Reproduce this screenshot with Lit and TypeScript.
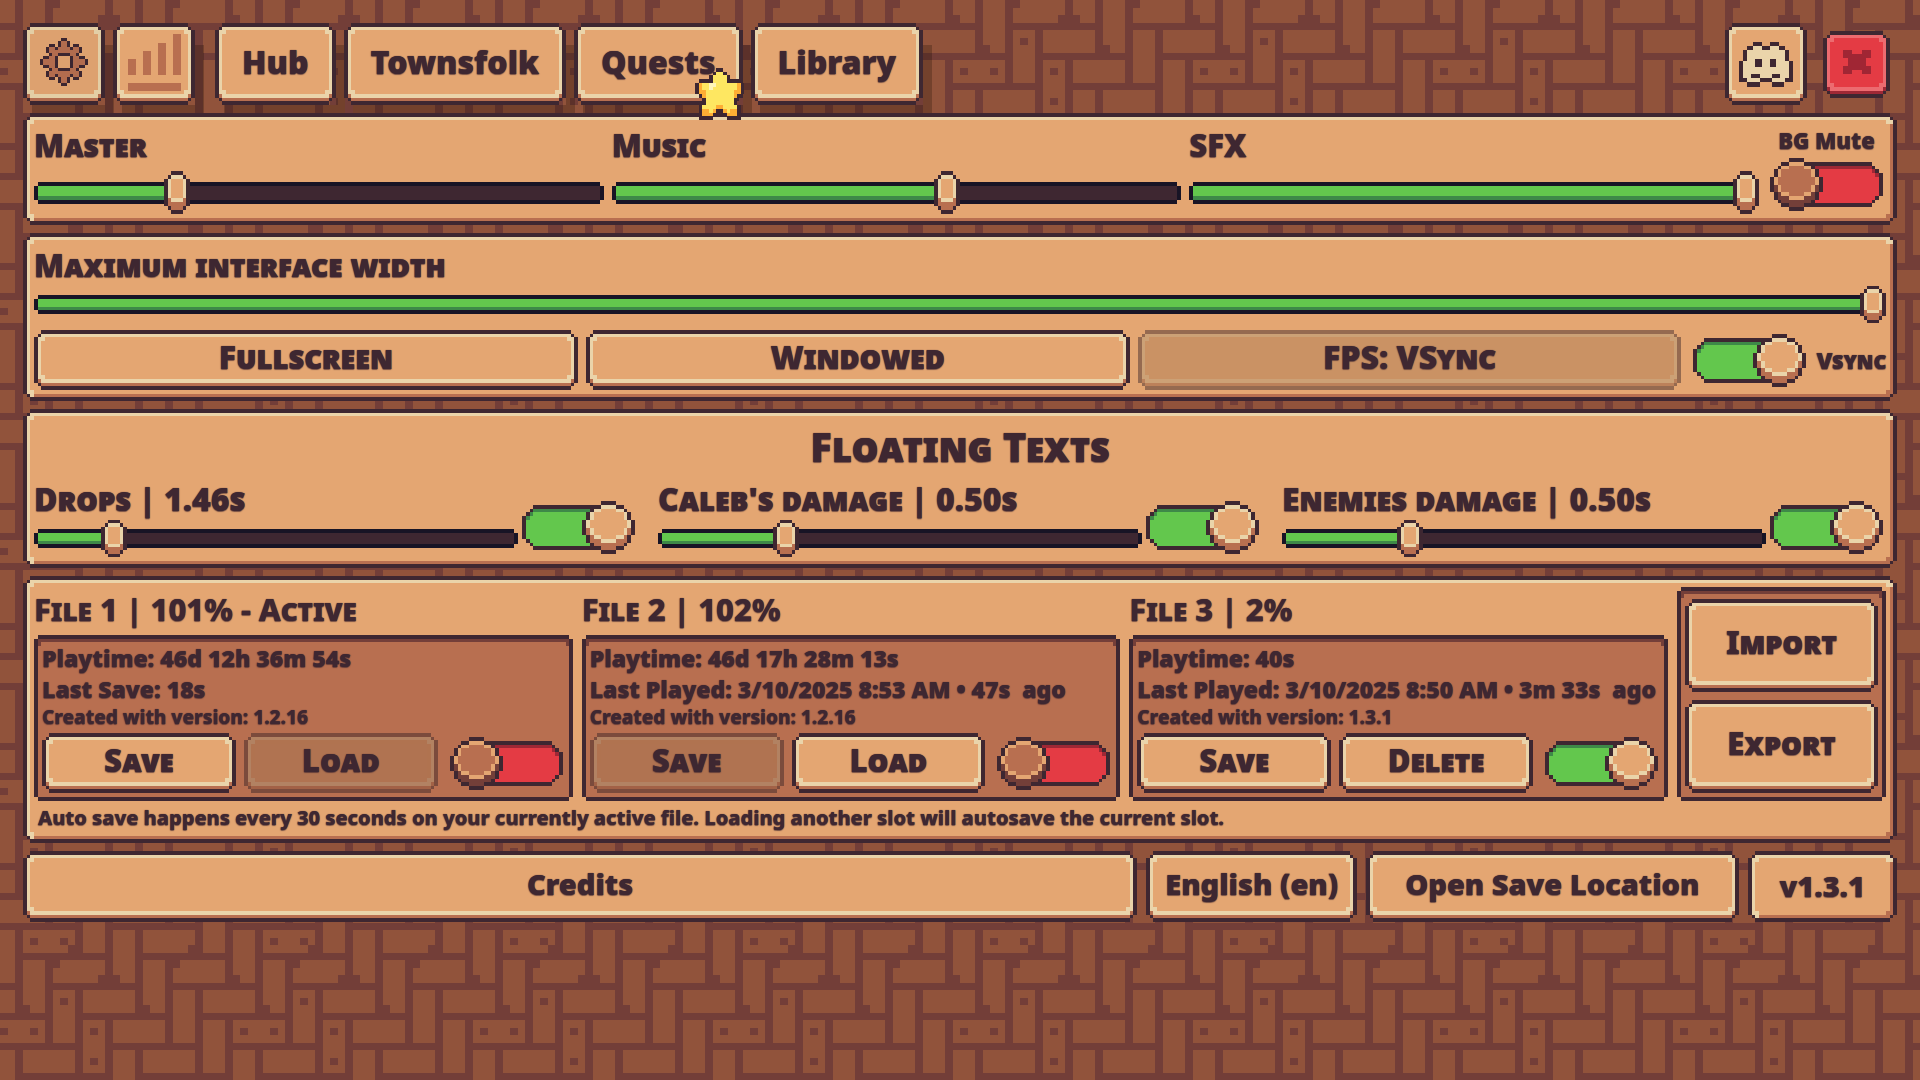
import { LitElement, html, svg, css, unsafeCSS } from "lit";
import { customElement, property, state } from "lit/decorators.js";

type Palette = Record<string, string>;

const WOOD: Palette = { X: "#3e2731", c: "#ead4aa", f: "#e4a672", b: "#b86f50" };
const OFF_WOOD: Palette = { X: "#2d1c24", c: "#ab9b7c", f: "#a77953", b: "#86513a" };
const RED: Palette = { X: "#3e2731", c: "#ec6b70", f: "#e43b44", b: "#9e2835" };
const INSET: Palette = { X: "#3e2731", d: "#743f39", f: "#b86f50" };

/** Turns rows of palette letters into runs of equal colour. */
function runs(rows: string[], palette: Palette) {
  const out: { x: number; y: number; w: number; fill: string }[] = [];
  rows.forEach((row, y) => {
    let x = 0;
    while (x < row.length) {
      let end = x + 1;
      while (end < row.length && row[end] === row[x]) end++;
      const fill = palette[row[x]];
      if (fill) out.push({ x, y, w: end - x, fill });
      x = end;
    }
  });
  return out;
}

function svgUrl(body: string, w: number, h: number, scale: number, opacity = 1) {
  const doc =
    `<svg xmlns="http://www.w3.org/2000/svg" width="${w * scale}" height="${h * scale}" viewBox="0 0 ${w} ${h}" ` +
    `preserveAspectRatio="none" shape-rendering="crispEdges"><g opacity="${opacity}">${body}</g></svg>`;
  return unsafeCSS(`url("data:image/svg+xml,${encodeURIComponent(doc)}")`);
}

function pixelUrl(rows: string[], palette: Palette, scale = 4, opacity = 1) {
  const body = runs(rows, palette)
    .map((r) => `<rect x="${r.x}" y="${r.y}" width="${r.w}" height="1" fill="${r.fill}"/>`)
    .join("");
  return svgUrl(body, rows[0].length, rows.length, scale, opacity);
}

const BUTTON_TILE = [
  "..XXXX..",
  ".XccccX.",
  "XccffccX",
  "XcffffcX",
  "XccffccX",
  "XbccccbX",
  ".XbbbbX.",
  "..XXXX..",
];

const PANEL_TILE = [
  "..XXXX..",
  ".XccccX.",
  "XccffccX",
  "XcffffbX",
  "XcffffbX",
  "XccffbbX",
  ".XcbbbX.",
  "..XXXX..",
];

const INSET_TILE = [
  ".XXXXXX.",
  "XddddddX",
  "XdffffdX",
  "XffffffX",
  "XffffffX",
  "XffffffX",
  "XffffffX",
  ".XXXXXX.",
];

const THUMB = [
  "..XXX..",
  ".XcccX.",
  "XcfffcX",
  "XcfffcX",
  "XcfffcX",
  "XcfffcX",
  "XcfffcX",
  "XbcccbX",
  "XbbbbbX",
  ".XbbbX.",
  "..XXX..",
];

const KNOB = [
  ".....XXXX.....",
  "...XXccccXX...",
  "..XccffffccX..",
  ".XcffffffffcX.",
  ".XcffffffffcX.",
  "XcffffffffffcX",
  "XcffffffffffcX",
  "XbcffffffffcbX",
  "XbcffffffffcbX",
  ".XbccffffccbX.",
  ".XbbbccccbbbX.",
  "..XbbbbbbbbX..",
  "...XXbbbbXX...",
  ".....XXXX.....",
];

/** Lays the knob over the left half of the rail; reversed rows put it on the right. */
function toggleRows(on: boolean) {
  const rail = [
    "",
    "...XXXXXXXXXXXXXXXXXXXXXXXX...",
    "..XDDDDDDDDDDDDDDDDDDDDDDDDX..",
    ".XDGGGGGGGGGGGGGGGGGGGGGGGGDX.",
    "XDGGGGGGGGGGGGGGGGGGGGGGGGGGDX",
    "XGGGGGGGGGGGGGGGGGGGGGGGGGGGGX",
    "XGGGGGGGGGGGGGGGGGGGGGGGGGGGGX",
    "XGGGGGGGGGGGGGGGGGGGGGGGGGGGGX",
    "XGGGGGGGGGGGGGGGGGGGGGGGGGGGGX",
    "XGGGGGGGGGGGGGGGGGGGGGGGGGGGGX",
    ".XGGGGGGGGGGGGGGGGGGGGGGGGGGX.",
    "..XGGGGGGGGGGGGGGGGGGGGGGGGX..",
    "...XXXXXXXXXXXXXXXXXXXXXXXX...",
    "",
  ];
  return rail.map((line, y) => {
    const base = line.padEnd(30, ".").split("");
    KNOB[y].split("").forEach((ch, x) => {
      if (ch !== ".") base[x] = ch;
    });
    // The rail does not show on the far side of the knob.
    const first = KNOB[y].search(/[^.]/);
    for (let x = 0; x < first; x++) base[x] = ".";
    return (on ? base.reverse() : base).join("");
  });
}

const TOGGLE_ON: Palette = { ...WOOD, G: "#63c74d", D: "#3e8948" };
const TOGGLE_OFF: Palette = { X: "#3e2731", c: "#e4a672", f: "#b86f50", b: "#743f39", G: "#e43b44", D: "#9e2835" };

/** Herringbone floor, 32 by 32 cells. */
function floorUrl() {
  const brick = "#91533b";
  const mortar = "#733e38";
  let body = `<rect width="32" height="32" fill="${mortar}"/>`;
  for (let oy = -16; oy < 32; oy += 16) {
    for (let ox = -32; ox < 32; ox += 16) {
      for (let k = 0; k < 4; k++) {
        body += `<rect x="${ox + 3 + 4 * k}" y="${oy + 4 * k}" width="3" height="7" fill="${brick}"/>`;
        body += `<rect x="${ox + 7 + 4 * k}" y="${oy + 4 * k}" width="7" height="3" fill="${brick}"/>`;
      }
    }
  }
  const chips = [
    [4, 29], [8, 29], [9, 30], [25, 30], [7, 0], [13, 2], [15, 2], [23, 0], [31, 2],
    [3, 6], [8, 5], [19, 6], [0, 9], [4, 9], [12, 9], [12, 13], [4, 17], [4, 21],
  ];
  for (const [x, y] of chips) body += `<rect x="${x}" y="${y}" width="1" height="1" fill="${mortar}"/>`;
  return svgUrl(body, 32, 32, 15);
}

const shared = css`
  * {
    box-sizing: border-box;
  }
  .frame {
    border: 11px solid transparent;
    border-image: ${pixelUrl(PANEL_TILE, WOOD)} 12 fill / 11px;
  }
  .inset {
    border: 8px solid transparent;
    border-image: ${pixelUrl(INSET_TILE, INSET)} 12 fill / 11px;
  }
  .btn {
    margin: 0;
    padding: 0 0 6px;
    background: none;
    border: 11px solid transparent;
    border-image: ${pixelUrl(BUTTON_TILE, WOOD)} 12 12 16 12 fill / 11px 11px 15px 11px;
    font: inherit;
    line-height: 1;
    color: inherit;
    text-shadow: inherit;
    white-space: nowrap;
    cursor: pointer;
  }
  .btn:disabled {
    border-image-source: ${pixelUrl(BUTTON_TILE, OFF_WOOD, 4, 0.43)};
    cursor: default;
  }
  .caps {
    font-size: var(--caps-size, 31px);
    font-variant: small-caps;
  }
`;

@customElement("pixel-slider")
export class PixelSlider extends LitElement {
  @property() label = "";
  @property({ type: Number }) value = 0;
  @property({ type: Boolean, reflect: true }) slim = false;

  static styles = [
    shared,
    css`
      :host {
        display: flex;
        flex-direction: column;
        flex: 1;
        min-width: 0;
        gap: 5px;
        --thumb: 43px;
        --track: 14px;
      }
      :host([slim]) {
        gap: 0;
        --thumb: 37px;
        --track: 11px;
      }
      label {
        line-height: 42px;
        white-space: nowrap;
      }
      input {
        --edge: linear-gradient(#181425, #181425);
        --fill: calc(13px + (100% - 26px) * var(--v));
        appearance: none;
        display: block;
        width: 100%;
        height: var(--thumb);
        margin: 0;
        outline-offset: 2px;
        background:
          var(--edge) 0 50% / 4px var(--track) no-repeat,
          var(--edge) 100% 50% / 4px var(--track) no-repeat,
          linear-gradient(#63c74d 0 72%, #3e8948 72%) 4px 50% / var(--fill) var(--track) no-repeat,
          linear-gradient(#3e2731, #3e2731) 50% 50% / calc(100% - 8px) var(--track) no-repeat,
          var(--edge) 50% 50% / calc(100% - 8px) calc(var(--track) + 8px) no-repeat;
      }
      input::-webkit-slider-thumb {
        appearance: none;
        width: 26px;
        height: var(--thumb);
        background: ${pixelUrl(THUMB, WOOD)} 0 0 / 100% 100% no-repeat;
      }
    `,
  ];

  private onInput(event: Event) {
    this.value = Number((event.target as HTMLInputElement).value);
  }

  render() {
    return html`
      <label class="caps" for="range">${this.label}</label>
      <input
        id="range"
        type="range"
        min="0"
        max="100"
        step="0.1"
        style="--v: ${this.value / 100}"
        .value=${String(this.value)}
        @input=${this.onInput}
      />
    `;
  }
}

interface Slot {
  title: string;
  lines: string[];
  version: string;
  actions: { label: string; disabled: boolean }[];
  enabled: boolean;
}

@customElement("app-root")
export class AppRoot extends LitElement {
  @state() private slots: Slot[] = [
    {
      title: "File 1 | 101% - Active",
      lines: ["Playtime: 46d 12h 36m 54s", "Last Save: 18s"],
      version: "1.2.16",
      actions: [
        { label: "Save", disabled: false },
        { label: "Load", disabled: true },
      ],
      enabled: false,
    },
    {
      title: "File 2 | 102%",
      lines: ["Playtime: 46d 17h 28m 13s", "Last Played: 3/10/2025 8:53 AM • 47s  ago"],
      version: "1.2.16",
      actions: [
        { label: "Save", disabled: true },
        { label: "Load", disabled: false },
      ],
      enabled: false,
    },
    {
      title: "File 3 | 2%",
      lines: ["Playtime: 40s", "Last Played: 3/10/2025 8:50 AM • 3m 33s  ago"],
      version: "1.3.1",
      actions: [
        { label: "Save", disabled: false },
        { label: "Delete", disabled: false },
      ],
      enabled: true,
    },
  ];

  private texts = [
    { label: "Drops | 1.46s", value: 14.6 },
    { label: "Caleb's damage | 0.50s", value: 25 },
    { label: "Enemies damage | 0.50s", value: 25 },
  ];

  static styles = [
    shared,
    css`
      :host {
        display: block;
        min-height: 100vh;
        box-sizing: border-box;
        padding: 23px;
        background: ${floorUrl()} 0 0 / 240px 240px;
        color: #3e2731;
        font-family: "Noto Sans", "Open Sans", sans-serif;
        font-weight: 900;
        text-shadow:
          0 0 1px #3e2731,
          0 1px 1px rgba(62, 39, 49, 0.6);
      }
      .page {
        display: flex;
        flex-direction: column;
        gap: 8px;
      }
      h2,
      h3,
      p {
        margin: 0;
        font-weight: inherit;
      }
      nav,
      .row {
        display: flex;
        gap: 8px;
      }
      nav {
        align-items: center;
        font-size: 32px;
      }
      nav .btn {
        position: relative;
        height: 82px;
        padding: 0 16px 4px;
      }
      nav .cast {
        box-shadow: 9px 22px 0 rgba(20, 10, 0, 0.24);
      }
      nav .icon {
        display: grid;
        place-items: center;
        width: 82px;
        padding: 0 0 4px;
      }
      nav .chat {
        padding: 0;
      }
      .current {
        filter: brightness(0.97);
      }
      .stats {
        margin-right: 12px;
      }
      .spacer {
        flex: 1;
      }
      nav .close {
        width: 67px;
        height: 67px;
        margin: 0 7px 0 8px;
        border-image-source: ${pixelUrl(BUTTON_TILE, RED)};
      }
      .star {
        position: absolute;
        z-index: 1;
        right: -12px;
        bottom: -26px;
      }
      .frame {
        position: relative;
      }
      svg {
        display: block;
      }
      .toggle {
        appearance: none;
        flex: none;
        width: 113px;
        height: 53px;
        margin: 0;
        background: ${pixelUrl(toggleRows(false), TOGGLE_OFF)} 0 0 / 100% 100% no-repeat;
        cursor: pointer;
      }
      .toggle:checked {
        background-image: ${pixelUrl(toggleRows(true), TOGGLE_ON)};
      }
      .mute {
        display: flex;
        flex-direction: column;
        align-items: center;
        gap: 2px;
        padding: 0 3px;
        font-size: 22px;
        line-height: 32px;
      }
      .display .btn {
        flex: 1;
        height: 60px;
      }
      .display {
        align-items: center;
        margin-top: 7px;
        --caps-size: 32px;
      }
      .vsync {
        display: flex;
        align-items: center;
        gap: 10px;
        padding-left: 4px;
        font-size: 23px;
        font-variant: small-caps;
      }
      .heading {
        font-size: 40px;
        font-variant: small-caps;
        line-height: 54px;
        margin-bottom: 4px;
        text-align: center;
      }
      .texts {
        gap: 20px;
        --caps-size: 32px;
      }
      .text {
        display: flex;
        flex: 1;
        align-items: flex-end;
        gap: 4px;
      }
      .text .toggle {
        margin: 0 3px 3px 0;
      }
      .saves {
        border-bottom-width: 8px;
        font-weight: 800;
      }
      .saves .btn,
      .saves .line {
        font-weight: 900;
      }
      .slots {
        gap: 9px;
      }
      .slot {
        flex: 1;
        min-width: 0;
      }
      .slot h3 {
        line-height: 44px;
        margin-bottom: 4px;
        white-space: nowrap;
      }
      .slot .line {
        font-size: 23px;
        line-height: 31px;
        white-space: pre;
      }
      .slot .version {
        font-size: 19px;
        line-height: 24px;
      }
      .actions {
        display: flex;
        align-items: center;
        gap: 8px;
        margin-top: 4px;
      }
      .actions .btn {
        flex: 1;
        height: 60px;
      }
      .actions .toggle {
        margin: 0 2px 0 4px;
      }
      .transfer {
        display: flex;
        flex-direction: column;
        gap: 8px;
        width: 209px;
        padding-top: 4px;
      }
      .transfer .btn {
        flex: 1;
      }
      .note {
        padding-left: 4px;
        font-size: 20px;
        line-height: 34px;
      }
      .foot {
        gap: 9px;
        font-size: 29px;
      }
      .foot .btn {
        height: 71px;
        padding: 0 28px 6px;
      }
      .foot .credits {
        flex: 1;
      }
      .foot .lang {
        padding: 0 8px 6px;
      }
      .version-tag {
        display: grid;
        place-items: center;
        height: 71px;
        padding: 0 21px 2px;
        line-height: 1;
      }
    `,
  ];

  private pixels(rows: string[], palette: Palette, width: number, height: number) {
    return html`<svg
      width=${width}
      height=${height}
      viewBox="0 0 ${rows[0].length} ${rows.length}"
      preserveAspectRatio="none"
      shape-rendering="crispEdges"
      aria-hidden="true"
    >
      ${runs(rows, palette).map((r) => svg`<rect x=${r.x} y=${r.y} width=${r.w} height="1" fill=${r.fill}></rect>`)}
    </svg>`;
  }

  private gear() {
    const top = [
      ".......XX.......",
      "......XbbX......",
      "...XX.XbbX.XX...",
      "..XbbXbbbbXbbX..",
      "..XbbbbbbbbbbX..",
      "...XbbXXXXbbX...",
      ".XXbbXffffXbbXX.",
      "XbbbbXffffXbbbbX",
    ];
    return this.pixels([...top, ...[...top].reverse()], WOOD, 48, 48);
  }

  private cross() {
    const rows = ["XX..XX", "XXXXXX", ".XXXX.", ".XXXX.", "XXXXXX", "XX..XX"];
    return this.pixels(rows, { X: "#a02634" }, 28, 24);
  }

  private star() {
    const rows = [
      "......XX......",
      ".....XYYX.....",
      "....XYYYYX....",
      ".XXXXYYYYXXXX.",
      "XOYYWWYYYYYYOX",
      "XOYYWYYYYYYYOX",
      "XOOYYYYYYYYOOX",
      ".XOYYYYYYYYOX.",
      "..XYYYYYYYYX..",
      "..XYYYYYYYYX..",
      ".XYYYYOOYYYYX.",
      ".XOOYOXXOYOOX.",
      ".XOOOX..XOOOX.",
      ".XXXX....XXXX.",
    ];
    return this.pixels(rows, { X: "#3e2731", Y: "#fee761", O: "#feae34", W: "#fff6b8" }, 49, 52);
  }

  private bars() {
    return html`<svg width="53" height="57" viewBox="0 0 53 57" fill="#b86f50" shape-rendering="crispEdges" aria-hidden="true">
      <rect x="0" y="25" width="8" height="16" />
      <rect x="15" y="17" width="8" height="24" />
      <rect x="30" y="9" width="8" height="32" />
      <rect x="45" y="0" width="8" height="41" />
      <rect x="0" y="49" width="53" height="8" />
    </svg>`;
  }

  private chat() {
    return html`<svg width="54" height="45" viewBox="178 127 163 134" shape-rendering="crispEdges" aria-hidden="true">
      <path
        fill="#ead4aa"
        d="M220 139H246V151H272V139H298V151H316V182H328V248H315V250H278V248H240V250H203V248H190V182H203V151H220Z"
      />
      <path
        fill="#3e2731"
        d="M220 127h26v12h-26zM272 127h26v12h-26zM203 139h17v12h-17zM246 139h26v12h-26zM298 139h18v12h-18zM190 151h13v31h-13zM316 151h12v31h-12zM178 182h12v66h-12zM328 182h13v66h-13zM227 178h19v25h-19zM273 178h18v25h-18zM215 223h25v13h-25zM278 223h25v13h-25zM240 236h38v12h-38zM190 236h13v12h-13zM316 236h12v12h-12zM203 248h37v13h-37zM278 248h37v13h-37z"
      />
    </svg>`;
  }

  render() {
    return html`
      <div class="page">
        <nav>
          <button class="btn icon cast current" aria-label="Settings">${this.gear()}</button>
          <button class="btn icon cast stats" aria-label="Statistics">${this.bars()}</button>
          <button class="btn cast">Hub</button>
          <button class="btn cast">Townsfolk</button>
          <button class="btn cast">Quests<span class="star">${this.star()}</span></button>
          <button class="btn cast">Library</button>
          <span class="spacer"></span>
          <button class="btn icon chat" aria-label="Community">${this.chat()}</button>
          <button class="btn icon close" aria-label="Close">${this.cross()}</button>
        </nav>

        <section class="frame row">
          <pixel-slider label="Master" .value=${24}></pixel-slider>
          <pixel-slider label="Music" .value=${59.2}></pixel-slider>
          <pixel-slider label="SFX" .value=${100}></pixel-slider>
          <div class="mute">
            <label for="mute">BG Mute</label>
            <input class="toggle" id="mute" type="checkbox" />
          </div>
        </section>

        <section class="frame">
          <pixel-slider slim label="Maximum interface width" .value=${100}></pixel-slider>
          <div class="row display">
            <button class="btn caps">Fullscreen</button>
            <button class="btn caps">Windowed</button>
            <button class="btn caps" disabled>FPS: VSync</button>
            <div class="vsync">
              <input class="toggle" id="vsync" type="checkbox" checked />
              <label for="vsync">Vsync</label>
            </div>
          </div>
        </section>

        <section class="frame">
          <h2 class="heading">Floating Texts</h2>
          <div class="row texts">
            ${this.texts.map(
              (t) => html`
                <div class="text">
                  <pixel-slider slim label=${t.label} .value=${t.value}></pixel-slider>
                  <input class="toggle" type="checkbox" aria-label=${t.label} checked />
                </div>
              `,
            )}
          </div>
        </section>

        <section class="frame saves">
          <div class="row slots">
            ${this.slots.map(
              (s) => html`
                <article class="slot">
                  <h3 class="caps">${s.title}</h3>
                  <div class="inset">
                    ${s.lines.map((line) => html`<p class="line">${line}</p>`)}
                    <p class="version">Created with version: ${s.version}</p>
                    <div class="actions">
                      ${s.actions.map(
                        (a) => html`<button class="btn caps" ?disabled=${a.disabled}>${a.label}</button>`,
                      )}
                      <input class="toggle" type="checkbox" aria-label=${s.title} .checked=${s.enabled} />
                    </div>
                  </div>
                </article>
              `,
            )}
            <div class="inset transfer">
              <button class="btn caps">Import</button>
              <button class="btn caps">Export</button>
            </div>
          </div>
          <p class="note">
            Auto save happens every 30 seconds on your currently active file. Loading another slot will autosave the current slot.
          </p>
        </section>

        <footer class="row foot">
          <button class="btn credits">Credits</button>
          <button class="btn lang">English (en)</button>
          <button class="btn">Open Save Location</button>
          <div class="frame version-tag">v1.3.1</div>
        </footer>
      </div>
    `;
  }
}
